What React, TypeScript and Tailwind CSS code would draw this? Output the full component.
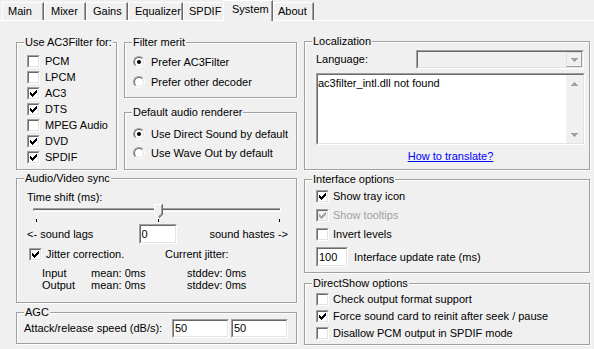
import React from "react";

const SUNK = "border border-t-[#a0a0a0] border-l-[#a0a0a0] border-r-white border-b-white";
const SUNK_IN = "border border-t-[#696969] border-l-[#696969] border-r-[#e3e3e3] border-b-[#e3e3e3]";

function CheckMark({ color }: { color: string }) {
  return (
    <svg width="7" height="7" viewBox="0 0 7 7" shapeRendering="crispEdges" fill={color}>
      <rect x="6" y="0" width="1" height="1" />
      <rect x="5" y="1" width="2" height="1" />
      <rect x="0" y="2" width="1" height="1" />
      <rect x="4" y="2" width="3" height="1" />
      <rect x="0" y="3" width="2" height="1" />
      <rect x="3" y="3" width="3" height="1" />
      <rect x="0" y="4" width="5" height="1" />
      <rect x="1" y="5" width="3" height="1" />
      <rect x="2" y="6" width="1" height="1" />
    </svg>
  );
}

function Check({ checked, disabled }: { checked?: boolean; disabled?: boolean }) {
  return (
    <div className={`w-[13px] h-[13px] shrink-0 ${SUNK}`}>
      <div
        className={`w-full h-full flex items-center justify-center ${SUNK_IN} ${
          disabled ? "bg-[#f0f0f0]" : "bg-white"
        }`}
      >
        {checked && <CheckMark color={disabled ? "#a0a0a0" : "#000"} />}
      </div>
    </div>
  );
}

function CheckRow({
  label,
  checked,
  disabled,
  gap,
}: {
  label: string;
  checked?: boolean;
  disabled?: boolean;
  gap: string;
}) {
  return (
    <div className={`flex items-center h-[16px] ${gap}`}>
      <Check checked={checked} disabled={disabled} />
      <span className={disabled ? "text-[#a0a0a0]" : ""}>{label}</span>
    </div>
  );
}

function Radio({ checked }: { checked?: boolean }) {
  return (
    <div className="w-[12px] h-[12px] shrink-0 rounded-full border border-t-[#a0a0a0] border-l-[#a0a0a0] border-r-white border-b-white">
      <div className="w-full h-full rounded-full flex items-center justify-center bg-white border border-t-[#696969] border-l-[#696969] border-r-[#e3e3e3] border-b-[#e3e3e3]">
        {checked && <div className="w-[4px] h-[4px] rounded-full bg-black" />}
      </div>
    </div>
  );
}

function RadioRow({ label, checked }: { label: string; checked?: boolean }) {
  return (
    <div className="flex items-center h-[16px] gap-[6px]">
      <Radio checked={checked} />
      <span>{label}</span>
    </div>
  );
}

function Edit({ className, value }: { className: string; value: string }) {
  return (
    <div className={`shrink-0 ${SUNK} ${className}`}>
      <div className={`w-full h-full bg-white flex items-center pl-[1px] ${SUNK_IN}`}>{value}</div>
    </div>
  );
}

function Group({
  title,
  className,
  children,
}: {
  title: string;
  className: string;
  children?: React.ReactNode;
}) {
  return (
    <div
      className={`relative border border-[#a0a0a0] shadow-[inset_1px_1px_0_#fff,1px_1px_0_#fff] ${className}`}
    >
      <span className="absolute left-[7px] top-[-7px] bg-[#f0f0f0] px-[1px] leading-[13px] whitespace-nowrap">
        {title}
      </span>
      {children}
    </div>
  );
}

function Tab({ className, children }: { className: string; children: React.ReactNode }) {
  return (
    <div
      className={`border-t border-l border-r border-t-white border-l-white border-r-[#696969] shadow-[inset_-1px_0_0_#a0a0a0] leading-[16px] whitespace-nowrap ${className}`}
    >
      {children}
    </div>
  );
}

function Arrow({ up }: { up?: boolean }) {
  return (
    <svg width="7" height="4" viewBox="0 0 7 4" shapeRendering="crispEdges" fill="#a0a0a0">
      {up ? <polygon points="3.5,0 7,4 0,4" /> : <polygon points="0,0 7,0 3.5,4" />}
    </svg>
  );
}

function Slider() {
  return (
    <svg width="262" height="20" viewBox="0 0 262 20" shapeRendering="crispEdges" className="block">
      <rect x="6" y="5" width="248" height="1" fill="#a0a0a0" />
      <rect x="6" y="5" width="1" height="4" fill="#a0a0a0" />
      <rect x="7" y="6" width="246" height="1" fill="#696969" />
      <rect x="7" y="7" width="246" height="1" fill="#f0f0f0" />
      <rect x="6" y="8" width="248" height="1" fill="#ffffff" />
      <rect x="253" y="5" width="1" height="4" fill="#ffffff" />
      <polygon points="127,1 136,1 136,11 131.5,15.5 127,11" fill="#f0f0f0" />
      <path d="M127.5 11 V1.5 H135" stroke="#ffffff" fill="none" />
      <path d="M127.5 11.5 L131 15" stroke="#ffffff" fill="none" />
      <path d="M135.5 1 V11.5 L131.5 15.5" stroke="#696969" fill="none" />
      <path d="M134.5 2 V11 L131.5 14" stroke="#a0a0a0" fill="none" />
      <rect x="9" y="16" width="1" height="3" fill="#000" />
      <rect x="131" y="16" width="1" height="3" fill="#000" />
      <rect x="252" y="16" width="1" height="3" fill="#000" />
    </svg>
  );
}

function LeftColumn() {
  const formats: [string, boolean][] = [
    ["PCM", false],
    ["LPCM", false],
    ["AC3", true],
    ["DTS", true],
    ["MPEG Audio", false],
    ["DVD", true],
    ["SPDIF", true],
  ];
  return (
    <div className="w-[281px] pt-[21px] flex flex-col shrink-0">
      <div className="flex gap-[7px]">
        <Group title="Use AC3Filter for:" className="w-[101px] h-[128px] pt-[10px] pl-[10px] flex flex-col">
          {formats.map(([l, c]) => (
            <CheckRow key={l} label={l} checked={c} gap="gap-[5px]" />
          ))}
        </Group>
        <div className="w-[173px] flex flex-col">
          <Group title="Filter merit" className="h-[56px] pt-[11px] pl-[8px] flex flex-col gap-[4px]">
            <RadioRow label="Prefer AC3Filter" checked />
            <RadioRow label="Prefer other decoder" />
          </Group>
          <Group
            title="Default audio renderer"
            className="mt-[14px] h-[58px] pt-[13px] pl-[8px] flex flex-col gap-[3px]"
          >
            <RadioRow label="Use Direct Sound by default" checked />
            <RadioRow label="Use Wave Out by default" />
          </Group>
        </div>
      </div>

      <Group title="Audio/Video sync" className="mt-[8px] h-[125px] pl-[10px] pr-[8px] flex flex-col">
        <div className="mt-[12px] h-[12px] leading-[12px]">Time shift (ms):</div>
        <Slider />
        <div className="mt-[1px] h-[20px] grid grid-cols-[1fr_auto_1fr] items-center">
          <span>&lt;- sound lags</span>
          <Edit className="w-[38px] h-[20px]" value="0" />
          <span className="justify-self-end">sound hastes -&gt;</span>
        </div>
        <div className="mt-[4px] h-[13px] flex items-center">
          <div className="w-[138px] pl-[2px] flex items-center gap-[4px]">
            <Check checked />
            <span>Jitter correction.</span>
          </div>
          <span>Current jitter:</span>
        </div>
        <div className="mt-[6px] pl-[15px] grid grid-cols-[49px_96px_auto] leading-[12px]">
          <span>Input</span>
          <span>mean: 0ms</span>
          <span>stddev: 0ms</span>
          <span>Output</span>
          <span>mean: 0ms</span>
          <span>stddev: 0ms</span>
        </div>
      </Group>

      <Group title="AGC" className="mt-[9px] h-[32px] pl-[7px] pr-[8px] flex items-center">
        <span>Attack/release speed (dB/s):</span>
        <div className="ml-auto flex gap-[2px]">
          <Edit className="w-[57px] h-[19px]" value="50" />
          <Edit className="w-[57px] h-[19px]" value="50" />
        </div>
      </Group>
    </div>
  );
}

function RightColumn() {
  return (
    <div className="w-[286px] pt-[20px] flex flex-col shrink-0">
      <Group title="Localization" className="h-[129px] pl-[11px] flex flex-col">
        <div className="mt-[8px] h-[19px] pr-[5px] flex items-center">
          <span>Language:</span>
          <div className={`ml-auto w-[168px] h-[19px] ${SUNK}`}>
            <div className={`w-full h-full bg-[#f0f0f0] flex justify-end ${SUNK_IN}`}>
              <div className="w-[16px] h-full border border-t-[#e3e3e3] border-l-[#e3e3e3] border-r-[#a0a0a0] border-b-[#a0a0a0] flex items-center justify-center">
                <Arrow />
              </div>
            </div>
          </div>
        </div>
        <div className={`mt-[4px] w-[269px] h-[72px] ${SUNK}`}>
          <div className={`w-full h-full bg-white flex ${SUNK_IN}`}>
            <div className="flex-1 pt-[2px]">ac3filter_intl.dll not found</div>
            <div className="w-[17px] h-full bg-[#f0f0f0] flex flex-col justify-between">
              <div className="h-[17px] flex items-center justify-center">
                <Arrow up />
              </div>
              <div className="h-[17px] flex items-center justify-center">
                <Arrow />
              </div>
            </div>
          </div>
        </div>
        <div className="mt-[5px] w-[269px] text-center">
          <span className="text-[#0000ff] underline">How to translate?</span>
        </div>
      </Group>

      <Group title="Interface options" className="mt-[9px] h-[94px] pt-[8px] pl-[11px] flex flex-col gap-[3px]">
        <CheckRow label="Show tray icon" checked gap="gap-[4px]" />
        <CheckRow label="Show tooltips" checked disabled gap="gap-[4px]" />
        <CheckRow label="Invert levels" gap="gap-[4px]" />
        <div className="mt-[2px] flex items-center gap-[6px]">
          <Edit className="w-[32px] h-[20px]" value="100" />
          <span>Interface update rate (ms)</span>
        </div>
      </Group>

      <Group title="DirectShow options" className="mt-[10px] h-[62px] pt-[7px] pl-[11px] flex flex-col gap-[1px]">
        <CheckRow label="Check output format support" gap="gap-[4px]" />
        <CheckRow label="Force sound card to reinit after seek / pause" checked gap="gap-[4px]" />
        <CheckRow label="Disallow PCM output in SPDIF mode" gap="gap-[4px]" />
      </Group>
    </div>
  );
}

export default function App() {
  return (
    <div className="w-[594px] h-[349px] overflow-hidden bg-[#f0f0f0] text-[11px] leading-[13px] text-black font-['Liberation_Sans',Arial,sans-serif]">
      <div className="h-[20px] pl-[2px] flex items-end">
        <Tab className="w-[42px] h-[18px] pl-[5px]">Main</Tab>
        <Tab className="w-[42px] h-[18px] pl-[6px]">Mixer</Tab>
        <Tab className="w-[42px] h-[18px] pl-[6px]">Gains</Tab>
        <Tab className="w-[55px] h-[18px] pl-[6px]">Equalizer</Tab>
        <Tab className="w-[42px] h-[18px] pl-[5px]">SPDIF</Tab>
        <Tab className="relative z-10 w-[50px] h-[21px] -ml-[2px] -mb-[1px] pl-[8px] bg-[#f0f0f0]">System</Tab>
        <Tab className="w-[41px] h-[18px] pl-[4px]">About</Tab>
      </div>
      <div className="h-[329px] border-t border-white pl-[16px] flex gap-[7px]">
        <LeftColumn />
        <RightColumn />
      </div>
    </div>
  );
}
